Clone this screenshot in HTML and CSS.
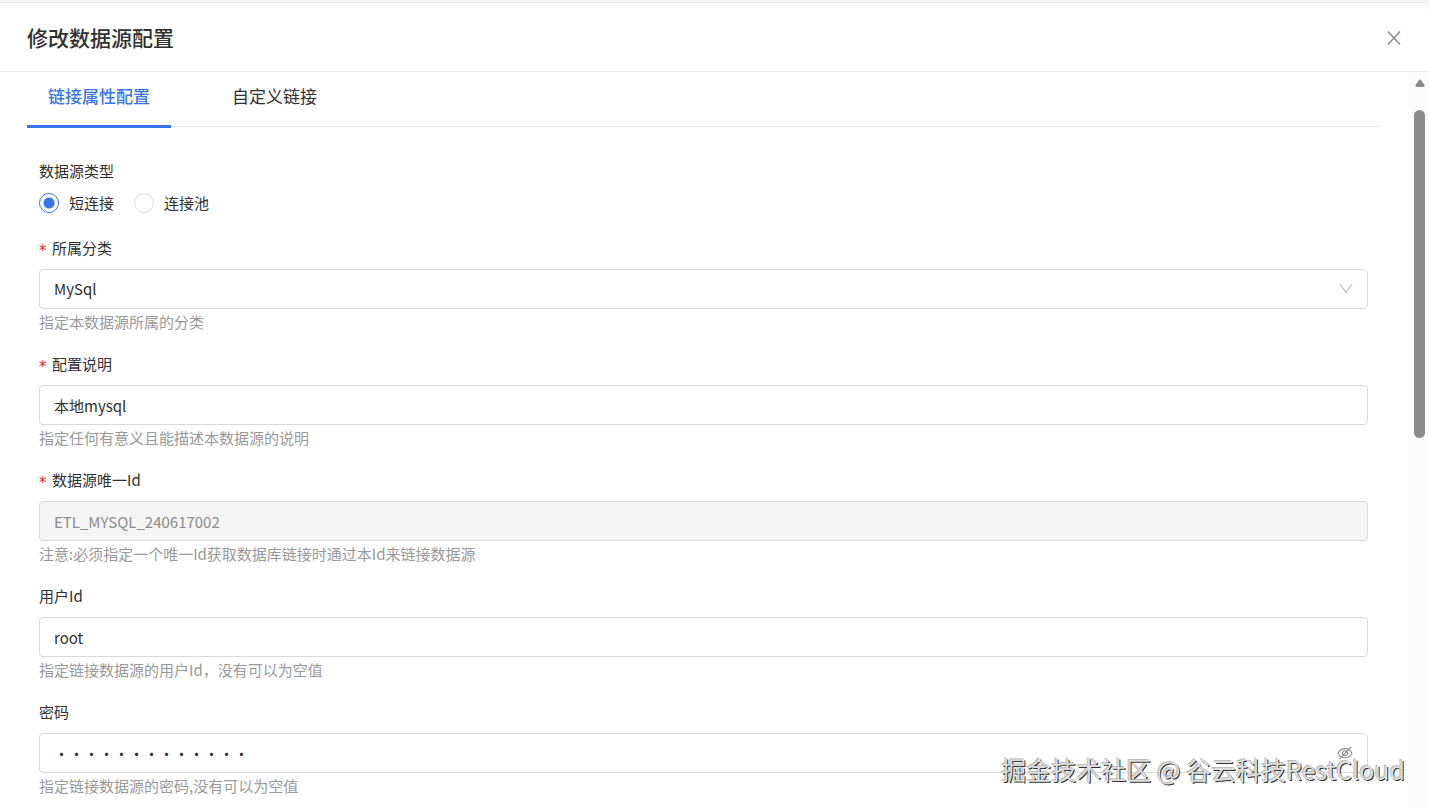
FILE: index.html
```html
<!DOCTYPE html>
<html lang="zh-CN">
<head>
  <meta charset="UTF-8">
  <meta name="viewport" content="width=device-width, initial-scale=1.0">
  <title>修改数据源配置</title>
  <link rel="stylesheet" href="styles.css">
</head>
<body>
  <div class="drawer">
    <header class="drawer-header">
      <h1>修改数据源配置</h1>
      <button type="button" class="close" aria-label="关闭">
        <svg width="14" height="16" viewBox="0 0 14 16" fill="none" stroke="currentColor" stroke-width="1.5">
          <path d="M1 2.500L13 15.500M13 2.500L1 15.500"/>
        </svg>
      </button>
    </header>

    <div class="drawer-body">
      <main class="content">
        <nav class="tabs">
          <a href="#link" class="tab active">链接属性配置</a>
          <a href="#custom" class="tab">自定义链接</a>
        </nav>

        <form class="form">
          <div class="field field-radio" role="radiogroup" aria-labelledby="typeLabel">
            <span class="label" id="typeLabel">数据源类型</span>
            <div class="radios">
              <label><input type="radio" name="type" checked>短连接</label>
              <label><input type="radio" name="type">连接池</label>
            </div>
          </div>

          <div class="field">
            <label class="label required" for="category">所属分类</label>
            <div class="control">
              <select id="category">
                <option>MySql</option>
              </select>
              <svg class="suffix" width="14" height="14" viewBox="0 0 14 14" fill="none" stroke="#bfbfbf" stroke-width="1.3">
                <path d="M1 2L7 10.5L13 2"/>
              </svg>
            </div>
            <p class="hint">指定本数据源所属的分类</p>
          </div>

          <div class="field">
            <label class="label required" for="remark">配置说明</label>
            <div class="control"><input type="text" id="remark" value="本地mysql"></div>
            <p class="hint">指定任何有意义且能描述本数据源的说明</p>
          </div>

          <div class="field">
            <label class="label required" for="sourceId">数据源唯一Id</label>
            <div class="control"><input type="text" id="sourceId" value="ETL_MYSQL_240617002" disabled></div>
            <p class="hint">注意:必须指定一个唯一Id获取数据库链接时通过本Id来链接数据源</p>
          </div>

          <div class="field">
            <label class="label" for="userId">用户Id</label>
            <div class="control"><input type="text" id="userId" value="root"></div>
            <p class="hint">指定链接数据源的用户Id，没有可以为空值</p>
          </div>

          <div class="field">
            <label class="label" for="password">密码</label>
            <div class="control">
              <input type="password" id="password" value="1234567890123">
              <button type="button" class="suffix eye" aria-label="显示密码">
                <svg width="16" height="14" viewBox="0 0 16 14" fill="none" stroke="currentColor" stroke-width="1.1">
                  <path d="M1 7.2C2.6 4.2 5 2.6 8 2.6S13.4 4.2 15 7.2C13.4 10.2 11 11.8 8 11.8S2.6 10.2 1 7.2Z"/>
                  <circle cx="8" cy="7.2" r="2.5"/>
                  <path d="M2.5 13.2L14 1"/>
                </svg>
              </button>
            </div>
            <p class="hint">指定链接数据源的密码,没有可以为空值</p>
          </div>
        </form>
      </main>

      <div class="scrollbar">
        <svg width="10" height="8" viewBox="0 0 10 8"><path d="M4 1Q5 0 6 1L9.5 6Q10 8 8.500 8H1.500Q0 8 0.500 6Z" fill="#8b8b8b"/></svg>
        <div class="thumb"></div>
      </div>
    </div>
  </div>

  <div class="watermark">掘金技术社区 @ 谷云科技RestCloud</div>
</body>
</html>
```

FILE: styles.css
```css
* {
  box-sizing: border-box;
}

body {
  margin: 0;
  padding-top: 2px;
  height: 100vh;
  overflow: hidden;
  position: relative;
  background-color: #f5f5f5;
  color: #303030;
  font-family: "Noto Sans CJK SC", sans-serif;
  font-size: 15px;
  line-height: 24px;
}

.drawer {
  height: 100%;
  display: flex;
  flex-direction: column;
  background-color: #fff;
  border-top: 1px solid #e6e6e6;
  border-top-right-radius: 8px;
}

.drawer-header {
  display: flex;
  align-items: center;
  justify-content: space-between;
  padding: 18px 28px 18px 27px;
  border-bottom: 1px solid #e8e8e8;
}

.drawer-header h1 {
  margin: 0;
  font-size: 21px;
  font-weight: 500;
  line-height: 32px;
}

button {
  padding: 0;
  border: none;
  background: none;
  color: #8c8c8c;
  cursor: pointer;
}

.close {
  display: flex;
}

.drawer-body {
  flex: 1;
  min-height: 0;
  display: flex;
}

.content {
  flex: 1;
  padding: 0 28px 0 27px;
  overflow: hidden;
}

/* Tabs */
.tabs {
  display: flex;
  gap: 40px;
  height: 55px;
  border-bottom: 1px solid #e8e8e8;
}

.tab {
  height: 56px;
  padding: 12px 21px 0;
  color: #303030;
  font-size: 17px;
  text-decoration: none;
}

.tab.active {
  color: #3875ea;
  font-weight: 500;
  border-bottom: 3px solid #3875ea;
}

/* Form */
.form {
  padding: 32px 12px 0;
}

.field {
  margin-bottom: 17px;
}

.field-radio {
  margin-bottom: 22px;
}

.label {
  display: flex;
  margin-bottom: 9px;
}

.required::before {
  content: "*";
  width: 13px;
  height: 24px;
  color: #d9262f;
  font-family: "DejaVu Sans", sans-serif;
  line-height: 30px;
}

.radios {
  display: flex;
  gap: 20px;
  line-height: 22px;
}

.radios label {
  display: flex;
  align-items: center;
  gap: 10px;
}

.radios input {
  appearance: none;
  width: 20px;
  height: 20px;
  margin: 0;
  border: 1px solid #d9d9d9;
  border-radius: 50%;
}

.radios input:checked {
  border-color: #3875ea;
  background: radial-gradient(circle, #3875ea 5px, #fff 6px);
}

.control {
  position: relative;
}

.control input,
.control select {
  display: block;
  appearance: none;
  width: 100%;
  height: 40px;
  padding: 0 14px;
  border: 1px solid #d9d9d9;
  border-radius: 4px;
  background-color: #fff;
  color: #303030;
  font: inherit;
}

.control input:disabled {
  background-color: #f5f5f5;
  color: #8c8c8c;
}

.suffix {
  position: absolute;
  top: 13px;
  right: 15px;
}

.eye {
  height: 14px;
  line-height: 0;
}

.hint {
  margin: 0;
  color: #999;
  line-height: 26px;
}

/* Scrollbar */
.scrollbar {
  width: 21px;
  padding: 7px 4px 0 6px;
  display: flex;
  flex-direction: column;
  align-items: center;
  gap: 23px;
  background-color: #fcfcfc;
}

.thumb {
  width: 11px;
  height: 45%;
  border-radius: 6px;
  background-color: #8b8b8b;
}

.watermark {
  position: absolute;
  right: 24px;
  bottom: 20px;
  color: #ddd;
  font-size: 25px;
  line-height: 36px;
  text-shadow: 1px 1px 0 #333, -1px -1px 0 #bbb;
}
```
